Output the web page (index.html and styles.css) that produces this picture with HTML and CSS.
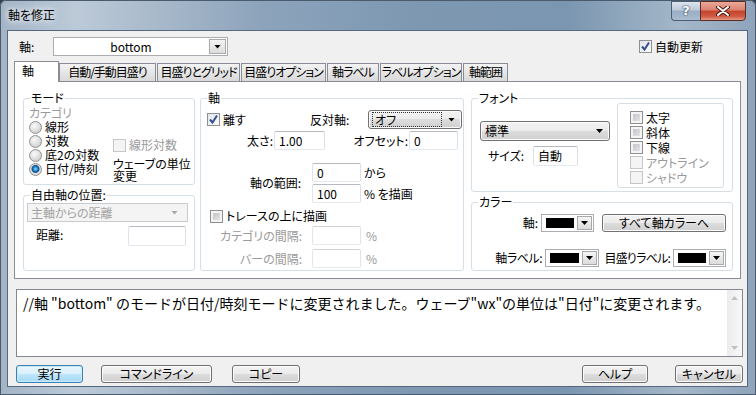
FILE: index.html
```html
<!DOCTYPE html>
<html lang="ja">
<head>
<meta charset="UTF-8" />
<title>軸を修正</title>
<link rel="stylesheet" href="styles.css">
</head>
<body>
<div class="window">
  <div class="titlebar">
    <span class="title">軸を修正</span>
    <div class="caption-buttons">
      <span class="cap-help">?</span>
      <span class="cap-close">
        <svg width="14" height="10" viewBox="0 0 14 10"><path d="M2 1 L12 9 M12 1 L2 9" stroke="#4a1d15" stroke-width="4" stroke-linecap="round"/><path d="M2 1 L12 9 M12 1 L2 9" stroke="#fff" stroke-width="2" stroke-linecap="round"/></svg>
      </span>
    </div>
  </div>

  <div class="client">
    <!-- 対象の軸 -->
    <div class="top-row">
      <span class="axis-label">軸:</span>
      <div class="combo combo-axis">
        <span class="combo-value">bottom</span>
        <span class="combo-btn"><i class="tri"></i></span>
      </div>
      <label class="check-row auto-update">
        <span class="box checked"><svg width="11" height="11" viewBox="0 0 11 11"><path d="M2 5.5 L4.5 8.5 L9 1.5" fill="none" stroke="#34508f" stroke-width="2"/></svg></span>自動更新
      </label>
    </div>

    <!-- タブ -->
    <div class="tabs">
      <span class="tab active">軸</span>
      <span class="tab">自動/手動目盛り</span>
      <span class="tab">目盛りとグリッド</span>
      <span class="tab">目盛りオプション</span>
      <span class="tab">軸ラベル</span>
      <span class="tab">ラベルオプション</span>
      <span class="tab">軸範囲</span>
    </div>

    <div class="panel">
      <div class="col">
        <fieldset class="group group-mode">
          <legend>モード</legend>
          <div class="mode-body">
            <div class="mode-list">
              <div class="muted cat-label">カテゴリ</div>
              <label class="radio-row"><span class="radio"></span>線形</label>
              <label class="radio-row"><span class="radio"></span>対数</label>
              <label class="radio-row"><span class="radio"></span>底2の対数</label>
              <label class="radio-row"><span class="radio on"></span>日付/時刻</label>
            </div>
            <div class="mode-extra">
              <label class="check-row muted"><span class="box disabled"></span>線形対数</label>
              <div class="wave-unit">ウェーブの単位<br>変更</div>
            </div>
          </div>
        </fieldset>

        <fieldset class="group group-free">
          <legend>自由軸の位置:</legend>
          <div class="combo combo-disabled free-combo">
            <span class="combo-value">主軸からの距離</span>
            <i class="tri tri-gray"></i>
          </div>
          <div class="dist-row">
            <span class="dist-label">距離:</span>
            <span class="field dist-field"></span>
          </div>
        </fieldset>
      </div>

      <fieldset class="group group-axis">
        <legend>軸</legend>
        <div class="axis-row top-line">
          <label class="check-row separate">
            <span class="box checked"><svg width="11" height="11" viewBox="0 0 11 11"><path d="M2 5.5 L4.5 8.5 L9 1.5" fill="none" stroke="#34508f" stroke-width="2"/></svg></span>離す
          </label>
          <span class="opp-label">反対軸:</span>
          <div class="select opp-select"><span class="select-value focused">オフ</span><i class="tri"></i></div>
        </div>
        <div class="axis-row width-line">
          <span class="cell-label width-label">太さ:</span>
          <span class="field width-field">1.00</span>
          <span class="cell-label offset-label">オフセット:</span>
          <span class="field offset-field">0</span>
        </div>
        <div class="axis-row range-line">
          <span class="cell-label range-label">軸の範囲:</span>
          <div class="range-fields">
            <div class="range-item"><span class="field small-field">0</span><span class="after">から</span></div>
            <div class="range-item"><span class="field small-field">100</span><span class="after">% を描画</span></div>
          </div>
        </div>
        <label class="check-row trace-row"><span class="box"></span>トレースの上に描画</label>
        <div class="axis-row gap-line muted">
          <span class="cell-label gap-label">カテゴリの間隔:</span>
          <span class="field small-field disabled"></span>
          <span class="pct">%</span>
        </div>
        <div class="axis-row gap-line bar-line muted">
          <span class="cell-label gap-label">バーの間隔:</span>
          <span class="field small-field disabled"></span>
          <span class="pct">%</span>
        </div>
      </fieldset>

      <div class="col">
        <fieldset class="group group-font">
          <legend>フォント</legend>
          <div class="font-body">
            <div class="font-main">
              <div class="select font-select"><span class="select-value">標準</span><i class="tri"></i></div>
              <div class="size-row">
                <span class="size-label">サイズ:</span>
                <span class="field size-field">自動</span>
              </div>
            </div>
            <div class="style-box">
              <label class="check-row"><span class="box"></span>太字</label>
              <label class="check-row"><span class="box"></span>斜体</label>
              <label class="check-row"><span class="box"></span>下線</label>
              <label class="check-row muted"><span class="box disabled"></span>アウトライン</label>
              <label class="check-row muted"><span class="box disabled"></span>シャドウ</label>
            </div>
          </div>
        </fieldset>

        <fieldset class="group group-color">
          <legend>カラー</legend>
          <div class="color-row first">
            <span class="cell-label c-axis">軸:</span>
            <div class="color-combo c-axis-combo"><span class="swatch"></span><span class="combo-btn"><i class="tri"></i></span></div>
            <span class="btn all-btn">すべて軸カラーへ</span>
          </div>
          <div class="color-row second">
            <span class="cell-label c-label">軸ラベル:</span>
            <div class="color-combo c-label-combo"><span class="swatch"></span><span class="combo-btn"><i class="tri"></i></span></div>
            <span class="cell-label c-tick">目盛りラベル:</span>
            <div class="color-combo c-tick-combo"><span class="swatch"></span><span class="combo-btn"><i class="tri"></i></span></div>
          </div>
        </fieldset>
      </div>
    </div>

    <!-- コマンド -->
    <div class="console">
      <div class="console-text">//軸 "bottom" のモードが日付/時刻モードに変更されました。ウェーブ"wx"の単位は"日付"に変更されます。</div>
      <div class="scrollbar"><i class="sb-up"></i><i class="sb-down"></i></div>
    </div>

    <div class="buttons">
      <span class="btn btn-default b-run">実行</span>
      <span class="btn b-cmd">コマンドライン</span>
      <span class="btn b-copy">コピー</span>
      <span class="btn b-help">ヘルプ</span>
      <span class="btn b-cancel">キャンセル</span>
    </div>
  </div>
</div>
</body>
</html>
```

FILE: styles.css
```css
/* 共通 */
*, *::before, *::after {
  box-sizing: border-box;
}
html, body {
  margin: 0;
}
body {
  width: 756px;
  height: 395px;
  overflow: hidden;
  background: #2f3f50;
  font-family: "Noto Sans CJK JP", "Noto Sans", sans-serif;
  font-size: 12px;
  line-height: 14px;
  font-feature-settings: "palt";
  color: #000;
}
.muted {
  color: #9a9a9a;
}

/* ウィンドウ枠 */
.window {
  width: 756px;
  height: 395px;
  padding: 0 8px 8px 7px;
  border-radius: 6px 6px 0 0;
  background: linear-gradient(90deg, #a3b4c6 0%, #bccad8 10%, #a6b7c9 22%, #8ca3bb 35%, #7e98b2 55%, #7b96b0 75%, #a4b7c9 90%, #8ea4bb 100%);
  box-shadow: inset 0 0 0 1px #4b5b6e;
}
.titlebar {
  height: 30px;
  display: flex;
  align-items: flex-start;
}
.title {
  margin: 8px 0 0 1px;
  text-shadow: 0 0 6px #fff, 0 0 10px rgba(255, 255, 255, 0.8);
}
.caption-buttons {
  display: flex;
  margin: 1px 2px 0 auto;
}
.cap-help {
  width: 29px;
  height: 20px;
  border: 1px solid #4c5e74;
  border-right: none;
  border-radius: 0 0 0 4px;
  background: linear-gradient(#dce5ee, #bccadb 45%, #99aec4 50%, #aabdd0);
  color: #fff;
  font-family: "DejaVu Sans", sans-serif;
  font-weight: bold;
  font-size: 13px;
  line-height: 18px;
  text-align: center;
  text-shadow: 0 0 2px #2b3a4c, 0 0 1px #2b3a4c;
}
.cap-close {
  width: 46px;
  height: 20px;
  border: 1px solid #5b2a22;
  border-radius: 0 0 4px 0;
  background: linear-gradient(#eba999, #db8270 45%, #c7432b 50%, #cf5b44 80%, #e59a84);
  display: flex;
  align-items: center;
  justify-content: center;
}

/* クライアント領域 */
.client {
  height: 357px;
  border: 1px solid #55687e;
  background: #f0f0f0;
  display: flex;
  flex-direction: column;
}
.top-row {
  display: flex;
  align-items: center;
  height: 19px;
  margin-top: 6px;
  padding-left: 11px;
}
.axis-label {
  width: 34px;
}
.combo {
  display: flex;
  align-items: center;
  height: 19px;
  border: 1px solid #abadb3;
  background: #fff;
}
.combo-axis {
  width: 175px;
}
.combo-axis .combo-value {
  flex: 1;
  text-align: center;
  font-size: 12px;
}
.combo-btn {
  width: 17px;
  align-self: stretch;
  margin: 1px;
  border: 1px solid #a9a9a9;
  background: linear-gradient(#f4f4f4, #dcdcdc);
  display: flex;
  align-items: center;
  justify-content: center;
}
.tri {
  display: block;
  flex: none;
  width: 7px;
  height: 4px;
  background: #000;
  clip-path: polygon(0 0, 100% 0, 50% 100%);
}
.tri-gray {
  background: #a8a8a8;
}
.auto-update {
  margin-left: auto;
  padding-right: 44px;
}

/* チェックボックス・ラジオ */
.check-row, .radio-row {
  display: flex;
  align-items: center;
  gap: 3px;
  white-space: nowrap;
}
.box {
  flex: none;
  width: 13px;
  height: 13px;
  border: 1px solid #8e8f8f;
  background: linear-gradient(135deg, #b9bdc2, #ececec);
  box-shadow: inset 0 0 0 2px #f4f4f4;
}
.box.checked {
  background: linear-gradient(135deg, #e2e5e9, #fbfbfb);
  box-shadow: none;
}
.box svg {
  display: block;
}
.box.disabled {
  border-color: #c4c6c8;
  background: #f4f4f4;
  box-shadow: none;
}
.radio {
  flex: none;
  width: 13px;
  height: 13px;
  border: 1px solid #8e8f8f;
  border-radius: 50%;
  background: radial-gradient(circle at 40% 35%, #fafafa, #cfcfcf 80%);
}
.radio.on {
  background: radial-gradient(circle at 50% 45%, #9fe0ff 0, #2a8ad4 2px, #0d4f8b 3.5px, #e6e6e6 4.5px, #cfcfcf 80%);
}

/* タブ */
.tabs {
  display: flex;
  align-items: flex-end;
  gap: 1px;
  height: 20px;
  margin: 5px 0 0 6px;
}
.tab {
  height: 18px;
  border: 1px solid #898c95;
  border-bottom: none;
  background: linear-gradient(#f3f3f3, #e6e6e6 50%, #d9d9d9);
  text-align: center;
  line-height: 16px;
  letter-spacing: -1px;
  white-space: nowrap;
  overflow: hidden;
}
.tab.active {
  position: relative;
  z-index: 1;
  height: 21px;
  margin-bottom: -1px;
  background: #fff;
  text-align: left;
  padding-left: 7px;
  line-height: 17px;
}
.tab:nth-child(1) { width: 45px; margin-right: -1px; }
.tab:nth-child(2) { width: 97px; }
.tab:nth-child(3) { width: 83px; }
.tab:nth-child(4) { width: 85px; }
.tab:nth-child(5) { width: 52px; }
.tab:nth-child(6) { width: 82px; }
.tab:nth-child(7) { width: 45px; }

/* タブページ */
.panel {
  height: 198px;
  margin: 0 6px;
  padding: 9px 7px 7px 8px;
  border: 1px solid #898c95;
  background: #fff;
  display: flex;
}
.col {
  display: flex;
  flex-direction: column;
  gap: 3px;
}
.group {
  margin: 0;
  padding: 0 5px;
  min-width: 0;
  border: 1px solid #d5dfe5;
  border-radius: 3px;
}
.group legend {
  margin-left: 1px;
  padding: 0 1px;
  line-height: 14px;
}
.cell-label {
  text-align: right;
  white-space: nowrap;
}
.field {
  display: block;
  height: 19px;
  padding: 0 4px;
  border: 1px solid;
  border-color: #b6b9bf #dbdfe6 #e3e9ef #e2e3ea;
  border-radius: 2px;
  background: #fff;
  line-height: 17px;
}
.field.disabled {
  border-color: #cfd2d6 #e2e4e8 #e6e9ed #e4e5ea;
}
.select {
  display: flex;
  align-items: center;
  height: 19px;
  padding: 0 6px 0 4px;
  border: 1px solid #707070;
  border-radius: 3px;
  background: linear-gradient(#f2f2f2, #ebebeb 50%, #dddddd 50%, #cfcfcf);
  box-shadow: inset 0 0 0 1px #fbfbfb;
}
.select .tri {
  margin-left: auto;
}
.select-value.focused {
  flex: 1;
  height: 15px;
  margin: 0 6px 0 -1px;
  padding-left: 2px;
  border: 1px dotted #333;
  line-height: 13px;
}
.select-value.focused + .tri {
  margin-left: 0;
}

/* モード */
.group-mode {
  width: 172px;
  height: 94px;
}
.mode-body {
  display: flex;
}
.mode-list {
  flex: none;
  width: 84px;
  padding-top: 1px;
}
.mode-extra {
  margin-top: 33px;
  white-space: nowrap;
}
.wave-unit {
  margin-top: 6px;
  line-height: 12px;
}

/* 自由軸の位置 */
.group-free {
  width: 172px;
  height: 83px;
}
.free-combo {
  width: 161px;
  margin: 1px 0 0 -2px;
  padding: 0 9px 0 3px;
  border-color: #c9cccf;
  background: #f4f4f4;
  color: #a3a3a3;
}
.free-combo .combo-value {
  flex: 1;
}
.dist-row {
  display: flex;
  align-items: flex-start;
  margin-top: 4px;
}
.dist-label {
  padding: 2px 0 0 7px;
}
.dist-field {
  width: 58px;
  height: 20px;
  margin: 0 3px 0 auto;
}

/* 軸 */
.group-axis {
  width: 264px;
  height: 180px;
  margin: 0 7px 0 5px;
  padding: 0 0 0 5px;
}
.axis-row {
  display: flex;
  align-items: center;
}
.top-line {
  margin-top: 5px;
}
.separate {
  width: 104px;
  padding-left: 1px;
}
.opp-label {
  width: 58px;
}
.opp-select {
  width: 94px;
}
.width-line {
  margin-top: 2px;
}
.width-label {
  width: 68px;
  padding-right: 1px;
}
.width-field {
  width: 51px;
}
.offset-label {
  width: 84px;
  padding-right: 1px;
}
.offset-field {
  width: 49px;
}
.range-line {
  margin-top: 13px;
}
.range-label {
  width: 106px;
  padding-right: 11px;
}
.range-fields {
  display: flex;
  flex-direction: column;
  gap: 2px;
}
.range-item {
  display: flex;
  align-items: center;
}
.small-field {
  width: 49px;
}
.after {
  margin-left: 3px;
}
.trace-row {
  margin-top: 6px;
  padding-left: 4px;
}
.gap-line {
  margin-top: 3px;
}
.bar-line {
  margin-top: 4px;
}
.gap-label {
  width: 106px;
  padding-right: 10px;
}
.pct {
  margin-left: 5px;
}

/* フォント */
.group-font {
  width: 262px;
  height: 101px;
}
.font-body {
  display: flex;
}
.font-select {
  width: 130px;
  height: 20px;
  margin: 16px 0 0 3px;
}
.size-row {
  display: flex;
  align-items: center;
  margin-top: 5px;
}
.size-label {
  width: 56px;
  padding-left: 11px;
}
.size-field {
  width: 45px;
  height: 20px;
  line-height: 18px;
}
.style-box {
  width: 107px;
  height: 85px;
  margin: -2px 3px 0 auto;
  padding: 6px 0 0 12px;
  border: 1px solid #d5dfe5;
  border-radius: 3px;
}
.style-box .check-row {
  height: 15px;
}

/* カラー */
.group-color {
  width: 262px;
  height: 76px;
}
.color-row {
  display: flex;
  align-items: center;
}
.color-row.first {
  height: 20px;
  margin-top: 4px;
}
.color-row.second {
  height: 18px;
  margin-top: 16px;
}
.c-axis {
  width: 62px;
  padding-right: 1px;
}
.c-label {
  width: 66px;
  padding-right: 1px;
  letter-spacing: -0.5px;
}
.c-tick {
  width: 74px;
  padding-right: 3px;
  letter-spacing: -0.8px;
}
.color-combo {
  display: flex;
  align-items: center;
  height: 18px;
  margin-left: 2px;
  padding: 0 0 0 4px;
  border: 1px solid #abadb3;
  background: #fff;
}
.c-axis-combo { width: 53px; }
.c-label-combo { width: 54px; }
.c-tick-combo { width: 53px; margin-left: 0; }
.swatch {
  flex: 1;
  height: 10px;
  background: #000;
  margin-right: 2px;
}
.color-combo .combo-btn {
  width: 15px;
  flex: none;
}
.all-btn {
  width: 124px;
  height: 20px;
  margin-left: 8px;
  line-height: 18px;
}

/* ボタン */
.btn {
  display: block;
  height: 18px;
  border: 1px solid #707070;
  border-radius: 3px;
  background: linear-gradient(#f2f2f2, #ebebeb 50%, #dddddd 50%, #cfcfcf);
  box-shadow: inset 0 0 0 1px #fcfcfc;
  text-align: center;
  line-height: 16px;
  white-space: nowrap;
}
.btn-default {
  border-color: #3c7fb1;
  background: linear-gradient(#eaf6fd, #d9f0fc 50%, #bee6fd 50%, #a7d9f5);
  box-shadow: inset 0 0 0 1px #c9ecfd;
}

/* コマンド欄 */
.console {
  display: flex;
  height: 68px;
  margin: 10px 4px 0 8px;
  border: 1px solid #828790;
  background: #fff;
}
.console-text {
  flex: 1;
  padding: 5px 0 0 6px;
  font-size: 14px;
  line-height: 16px;
  font-feature-settings: normal;
  white-space: nowrap;
  overflow: hidden;
}
.scrollbar {
  width: 15px;
  background: linear-gradient(90deg, #ececec, #f8f8f8);
  display: flex;
  flex-direction: column;
  align-items: center;
  justify-content: space-between;
  padding: 6px 0 6px;
}
.sb-up, .sb-down {
  display: block;
  width: 7px;
  height: 4px;
  background: #c2c2c2;
}
.sb-up {
  clip-path: polygon(50% 0, 100% 100%, 0 100%);
}
.sb-down {
  clip-path: polygon(0 0, 100% 0, 50% 100%);
}

.buttons {
  display: flex;
  margin: 8px 4px 0 8px;
}
.b-run { width: 67px; }
.b-cmd { width: 111px; margin-left: 18px; }
.b-copy { width: 68px; margin-left: 20px; }
.b-help { width: 66px; margin-left: auto; }
.b-cancel { width: 68px; margin-left: 27px; }
```
